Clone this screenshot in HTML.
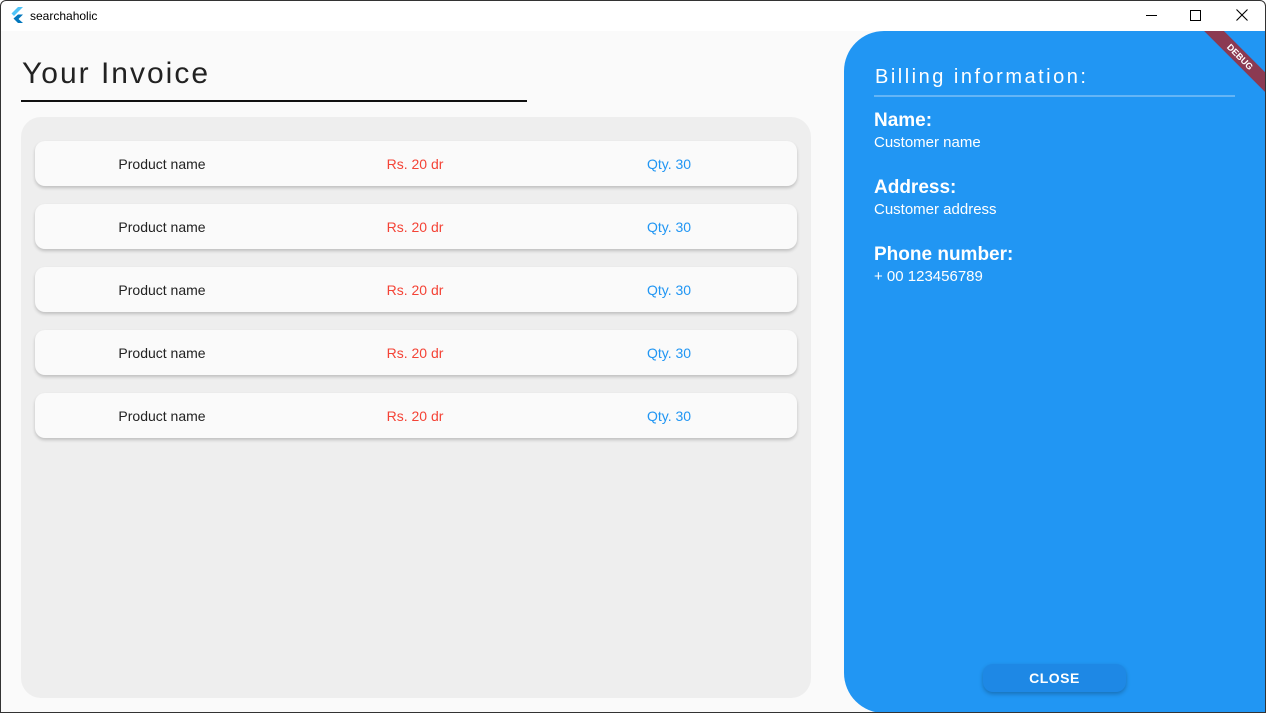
<!DOCTYPE html>
<html><head><style>
*{margin:0;padding:0;box-sizing:border-box}
body{width:1266px;height:713px;overflow:hidden;background:#fafafa;font-family:"Liberation Sans","DejaVu Sans",sans-serif;position:relative}
.win{position:absolute;inset:0;border:1px solid #333;border-radius:6px 6px 0 0;pointer-events:none;z-index:10}
.tb{position:absolute;left:0;top:0;width:1266px;height:31px;background:#fff}
.tb .t{position:absolute;left:30px;top:9px;font-size:12px;color:#000}
.abs{position:absolute}
.cont{position:absolute;left:21px;top:117px;width:790px;height:581px;background:#eee;border-radius:20px}
.row{position:absolute;left:35px;width:762px;height:45px;background:#fafafa;border-radius:10px;box-shadow:0 2px 3px rgba(0,0,0,.2);font-size:14px}
.row span{position:absolute;top:15px;transform:translateX(-50%);white-space:nowrap}
.panel{position:absolute;left:844px;top:31px;width:422px;height:682px;background:#2196f3;border-radius:40px 0 0 40px;color:#fff;overflow:hidden}
.h{font-size:19px;font-weight:bold;position:absolute;left:30px}
.v{font-size:15px;position:absolute;left:30px}
</style></head><body>
<div class="tb"><svg class="abs" style="left:10px;top:7px" width="14" height="16" viewBox="0 0 14 16"><path d="M8 0h5L4 9 1.5 6.5z" fill="#4fc3f7"/><path d="M8 7.5h5L8.5 12 13 16H8L3.5 11.5z" fill="#0277bd"/></svg><div class="t">searchaholic</div>
<div class="abs" style="left:1146px;top:15px;width:11px;height:1px;background:#000"></div>
<div class="abs" style="left:1190px;top:10px;width:11px;height:11px;border:1px solid #000"></div>
<svg class="abs" style="left:1236px;top:9px" width="12" height="12"><path d="M0.5 0.5L11.5 11.5M11.5 0.5L0.5 11.5" stroke="#000" stroke-width="1.1"/></svg>
</div>
<div class="abs" style="left:22px;top:57px;font-size:30px;letter-spacing:2px;color:#222">Your Invoice</div>
<div class="abs" style="left:21px;top:100px;width:506px;height:1.5px;background:#111"></div>
<div class="cont"></div>
<div class="row" style="top:141px"><span style="left:127px;color:#222">Product name</span><span style="left:380px;color:#f44336">Rs. 20 dr</span><span style="left:634px;color:#2196f3">Qty. 30</span></div>
<div class="row" style="top:204px"><span style="left:127px;color:#222">Product name</span><span style="left:380px;color:#f44336">Rs. 20 dr</span><span style="left:634px;color:#2196f3">Qty. 30</span></div>
<div class="row" style="top:267px"><span style="left:127px;color:#222">Product name</span><span style="left:380px;color:#f44336">Rs. 20 dr</span><span style="left:634px;color:#2196f3">Qty. 30</span></div>
<div class="row" style="top:330px"><span style="left:127px;color:#222">Product name</span><span style="left:380px;color:#f44336">Rs. 20 dr</span><span style="left:634px;color:#2196f3">Qty. 30</span></div>
<div class="row" style="top:393px"><span style="left:127px;color:#222">Product name</span><span style="left:380px;color:#f44336">Rs. 20 dr</span><span style="left:634px;color:#2196f3">Qty. 30</span></div>
<div class="panel">
<div class="abs" style="left:31px;top:35px;font-size:20px;letter-spacing:2.5px">Billing information:</div>
<div class="abs" style="left:30px;top:64px;width:361px;height:2px;background:#64b5f6"></div>
<div class="h" style="top:79px">Name:</div><div class="v" style="top:103px">Customer name</div>
<div class="h" style="top:146px">Address:</div><div class="v" style="top:170px">Customer address</div>
<div class="h" style="top:213px">Phone number:</div><div class="v" style="top:237px">+ 00 123456789</div>
<div class="abs" style="left:139px;top:633px;width:143px;height:28px;background:#1e88e5;border-radius:10px;box-shadow:0 2px 4px rgba(0,0,0,.25);font-size:14px;font-weight:bold;text-align:center;line-height:28px;letter-spacing:.5px">CLOSE</div>
<div class="abs" style="left:336px;top:19px;width:120px;height:14px;background:#8b3a52;transform:rotate(45deg);font-size:9px;font-weight:bold;text-align:center;line-height:14px">DEBUG</div>
</div>
<div class="win"></div>
</body></html>
